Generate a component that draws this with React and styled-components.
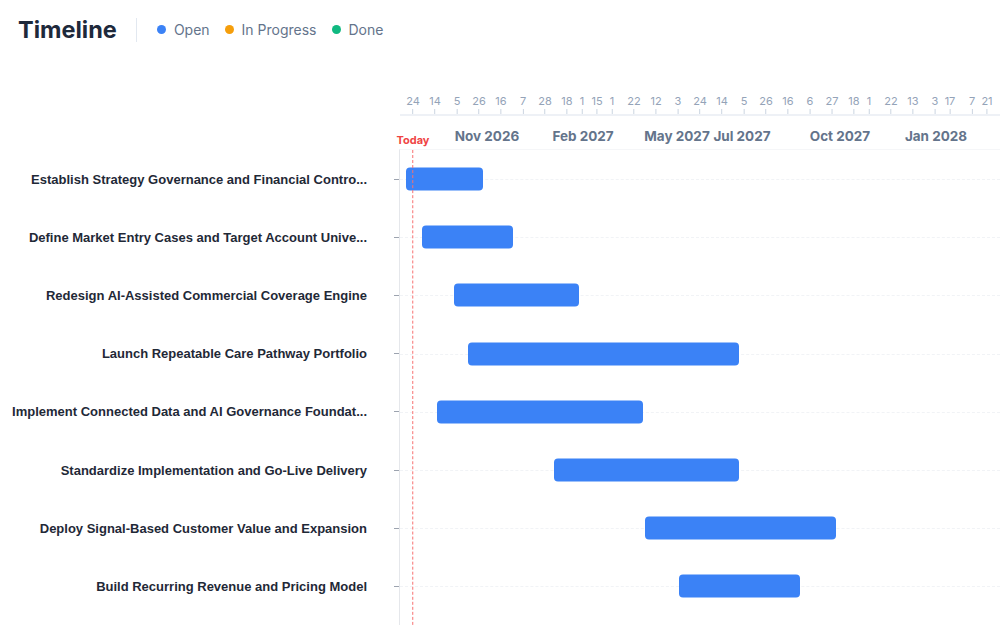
import React from "react";
import styled, { createGlobalStyle } from "styled-components";

const GlobalStyle = createGlobalStyle`
  html, body {
    margin: 0;
    padding: 0;
    background: #ffffff;
    overflow: hidden;
  }
  body {
    font-family: Inter, "Noto Sans", sans-serif;
  }
`;

const TRACK_START = 400;

const legend = [
  { label: "Open", color: "#3b82f6" },
  { label: "In Progress", color: "#f59e0b" },
  { label: "Done", color: "#10b981" },
];

const ticks = [
  ["24", 413], ["14", 435], ["5", 457], ["26", 479], ["16", 501], ["7", 523],
  ["28", 545], ["18", 567], ["1", 582], ["15", 597], ["1", 612], ["22", 634],
  ["12", 656], ["3", 678], ["24", 700], ["14", 722], ["5", 744], ["26", 766],
  ["16", 788], ["6", 810], ["27", 832], ["18", 854], ["1", 869], ["22", 891],
  ["13", 913], ["3", 935], ["17", 950], ["7", 972], ["21", 987],
];

const months = [
  ["Nov 2026", 487], ["Feb 2027", 583], ["May 2027", 677],
  ["Jul 2027", 742], ["Oct 2027", 840], ["Jan 2028", 936],
];

const tasks = [
  { name: "Establish Strategy Governance and Financial Contro...", from: 406, to: 483 },
  { name: "Define Market Entry Cases and Target Account Unive...", from: 422, to: 513 },
  { name: "Redesign AI-Assisted Commercial Coverage Engine", from: 454, to: 579 },
  { name: "Launch Repeatable Care Pathway Portfolio", from: 468, to: 739 },
  { name: "Implement Connected Data and AI Governance Foundat...", from: 437, to: 643 },
  { name: "Standardize Implementation and Go-Live Delivery", from: 554, to: 739 },
  { name: "Deploy Signal-Based Customer Value and Expansion", from: 645, to: 836 },
  { name: "Build Recurring Revenue and Pricing Model", from: 679, to: 800 },
];

const TODAY_X = 413;

const App = () => {
  return (
    <Page>
      <GlobalStyle />
      <Header>
        <Title>Timeline</Title>
        <Divider />
        <Legend>
          {legend.map((item) => (
            <LegendItem key={item.label}>
              <Dot color={item.color} />
              {item.label}
            </LegendItem>
          ))}
        </Legend>
      </Header>

      <Chart>
        <Spacer />
        <Axis>
          {ticks.map(([label, x], i) => (
            <Tick key={i} style={{ left: x - TRACK_START }}>
              <TickLabel>{label}</TickLabel>
              <TickMark />
            </Tick>
          ))}
          <AxisLine />
          {months.map(([label, x]) => (
            <Month key={label} style={{ left: x - TRACK_START }}>
              {label}
            </Month>
          ))}
          <TodayLabel style={{ left: TODAY_X - TRACK_START }}>Today</TodayLabel>
        </Axis>

        <Labels>
          {tasks.map((t) => (
            <LabelRow key={t.name}>
              <LabelText>{t.name}</LabelText>
              <RowTick />
            </LabelRow>
          ))}
        </Labels>
        <Tracks>
          {tasks.map((t) => (
            <Track key={t.name}>
              <Bar style={{ left: t.from - TRACK_START, width: t.to - t.from }} />
            </Track>
          ))}
          <TodayLine style={{ left: TODAY_X - TRACK_START }} />
        </Tracks>
      </Chart>
    </Page>
  );
};

const Page = styled.div`
  width: 1000px;
  height: 625px;
  overflow: hidden;
`;

const Header = styled.div`
  display: flex;
  align-items: center;
  height: 59px;
  padding-left: 18px;
`;

const Title = styled.h1`
  margin: 0;
  font-size: 23.5px;
  font-weight: 700;
  color: #1e293b;
  letter-spacing: 0;
`;

const Divider = styled.div`
  width: 1px;
  height: 24px;
  background-color: #e2e8f0;
  margin: 0 20px 0 19px;
`;

const Legend = styled.div`
  display: flex;
  align-items: center;
  gap: 15px;
`;

const LegendItem = styled.div`
  display: flex;
  align-items: center;
  gap: 8px;
  font-size: 14px;
  color: #64748b;
`;

const Dot = styled.span`
  width: 9px;
  height: 9px;
  border-radius: 50%;
  background-color: ${(p) => p.color};
`;

const Chart = styled.div`
  display: grid;
  grid-template-columns: 400px 600px;
  grid-template-rows: 91px auto;
`;

const Spacer = styled.div``;

const Axis = styled.div`
  position: relative;
`;

const Tick = styled.div`
  position: absolute;
  top: 35px;
  display: flex;
  flex-direction: column;
  align-items: center;
  transform: translateX(-50%);
`;

const TickLabel = styled.span`
  font-size: 11px;
  line-height: 14px;
  color: #94a3b8;
`;

const TickMark = styled.span`
  width: 1px;
  height: 6px;
  margin-top: 1px;
  background-color: #cbd5e1;
`;

const AxisLine = styled.div`
  position: absolute;
  top: 55px;
  left: 0;
  right: 0;
  height: 2px;
  background-color: #eef1f6;
`;

const Month = styled.div`
  position: absolute;
  top: 69px;
  transform: translateX(-50%);
  font-size: 13.5px;
  font-weight: 700;
  color: #64748b;
  white-space: nowrap;
`;

const TodayLabel = styled.div`
  position: absolute;
  top: 74px;
  transform: translateX(-50%);
  font-size: 11px;
  font-weight: 700;
  color: #ef4444;
  white-space: nowrap;
`;

const Labels = styled.div`
  display: flex;
  flex-direction: column;
`;

const LabelRow = styled.div`
  display: flex;
  align-items: center;
  justify-content: flex-end;
  height: 58.2px;
`;

const LabelText = styled.span`
  font-family: "Liberation Sans", Arial, sans-serif;
  font-size: 13px;
  font-weight: 700;
  color: #1f2937;
  white-space: nowrap;
  margin-right: 27px;
`;

const RowTick = styled.span`
  width: 5px;
  height: 1px;
  margin-right: 1px;
  background-color: #9ca3af;
`;

const Tracks = styled.div`
  position: relative;
  display: flex;
  flex-direction: column;
  border-left: 1px solid #e5e7eb;
  border-top: 1px solid #f5f6f8;
  margin-left: -1px;
  margin-top: -1px;
  min-height: 480px;
`;

const Track = styled.div`
  position: relative;
  height: 58.2px;

  &::before {
    content: "";
    position: absolute;
    left: 0;
    right: 0;
    top: 50%;
    border-top: 1px dashed #f1f3f6;
  }
`;

const Bar = styled.div`
  position: absolute;
  top: 50%;
  height: 23px;
  transform: translateY(-50%);
  border-radius: 4px;
  background-color: #3b82f6;
`;

const TodayLine = styled.div`
  position: absolute;
  top: 0;
  bottom: -20px;
  width: 0;
  border-left: 1.5px dashed #f87171;
  transform: translateX(-0.75px);
`;

export default App;
